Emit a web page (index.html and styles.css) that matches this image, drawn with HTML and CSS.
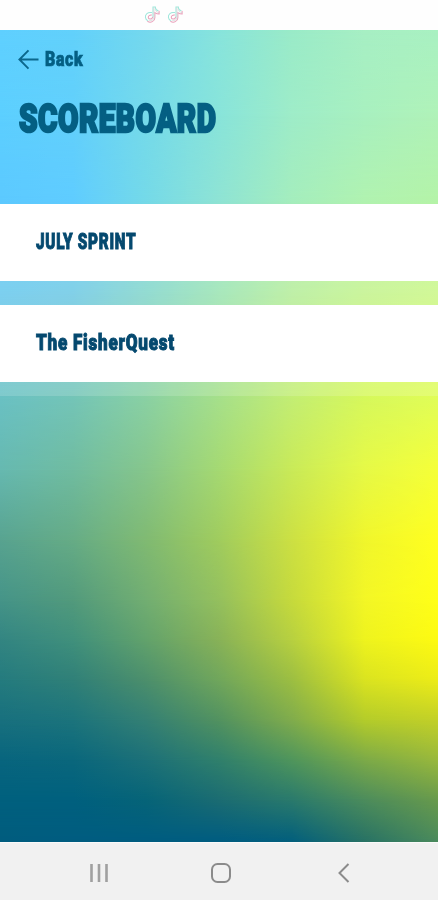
FILE: index.html
```html
<!DOCTYPE html>
<html lang="en">
<head>
<meta charset="utf-8">
<title>Scoreboard</title>
<link rel="stylesheet" href="styles.css">
</head>
<body>
<div class="phone">
  <div class="status">
    <svg class="note" viewBox="0 0 18 20"><use href="#note"/></svg>
    <svg class="note" viewBox="0 0 18 20"><use href="#note"/></svg>
    <svg width="0" height="0"><defs><g id="note" fill="none" stroke-width="1.1" stroke-linecap="round">
      <path stroke="#8fe3d6" d="M8 8C4 7 1 10 1.500 13c.3 2 1.500 3 2.500 3.500M9.500 13V2h2.500c0 2 1 3.500 3 4"/>
      <path stroke="#e58fae" d="M4 17.500c3 1.500 7.500 0 7.500-4V8c1.500 1 3 1.500 4.500 1.500V6.500M8 10.500c-2-.2-3.500 1-3.500 2.500 0 2.500 4 2.500 4.500 0"/>
      <path stroke="#c9cfcf" stroke-width=".8" d="M10.500 3v10.500c0 2.500-3 3.500-5 2.500M12 5c.5 1.500 1.500 2.500 3.500 3"/>
    </g></defs></svg>
  </div>
  <main class="screen">
    <div class="mesh">
      <i class="r0"></i><i class="r1"></i><i class="r2"></i><i class="r3"></i><i class="r4"></i><i class="r5"></i><i class="r6"></i>
      <i class="r7"></i><i class="r8"></i><i class="r9"></i><i class="r10"></i><i class="r11"></i><i class="r12"></i><i class="r13"></i>
    </div>
    <header class="header">
      <a class="back">
        <svg class="arrow" viewBox="0 0 22 22"><path d="M21.500 11H2M11 1.500L1.500 11L11 20.500"/></svg>
        <span class="back-label">Back</span>
      </a>
      <h1 class="title"><span>SCOREBOARD</span></h1>
    </header>
    <section class="list">
      <article class="card"><span class="name sprint">JULY SPRINT</span></article>
      <article class="card"><span class="name quest">The FisherQuest</span></article>
    </section>
  </main>
  <nav class="navbar">
    <svg class="recents" viewBox="0 0 20 20"><path d="M2.500 1v18M10 1v18M17.500 1v18"/></svg>
    <svg class="home" viewBox="0 0 22 22"><rect x="2" y="2" width="18" height="18" rx="5.500"/></svg>
    <svg class="prev" viewBox="0 0 12 20"><path d="M10.500 1L1.500 10L10.500 19"/></svg>
  </nav>
</div>
</body>
</html>
```
FILE: styles.css
```css
* { box-sizing: border-box; }
body { margin: 0; font-family: Roboto, "Liberation Sans", sans-serif; background: #fff; }
.phone { width: 438px; height: 900px; display: flex; flex-direction: column; overflow: hidden; }
.status { height: 30px; display: flex; gap: 6px; padding: 5px 0 0 144px; background: #fefefe; }
.note { width: 17px; height: 19px; opacity: .85; }
.screen { position: relative; height: 812px; overflow: hidden; }

/* Colour mesh: every row is a horizontal ramp that fades in over the row above it */
.mesh, .mesh i { position: absolute; inset: 0; }
.mesh i {
  background: linear-gradient(90deg, var(--c));
  -webkit-mask-image: linear-gradient(180deg, transparent var(--a), #000 var(--b));
  mask-image: linear-gradient(180deg, transparent var(--a), #000 var(--b));
}
.mesh .r0 { --a: -1px; --b: 0px; --c: #5fd0ff, #62d1fb, #74d8ee, #88e4dc, #9aebc8, #a7efc4, #a9f1c2; }
.mesh .r1 { --a: 0px; --b: 85px; --c: #5ccfff, #62d0fb, #75daea, #88e4da, #9eecc8, #a8f0bf, #b0f2b8; }
.mesh .r2 { --a: 85px; --b: 170px; --c: #5cc9ff, #5fccff, #74d9e8, #8ee3d4, #a4edbd, #b0f2b0, #b4f3a8; }
.mesh .r3 { --a: 170px; --b: 263px; --c: #66c7ed, #6dc8e4, #81d5ca, #99e3b1, #b4ed99, #c2f38c, #caf786; }
.mesh .r4 { --a: 263px; --b: 366px; --c: #6ac1c4, #74c5b8, #8ad1a4, #a6e08b, #c3ee74, #d6f85c, #e0fd58; }
.mesh .r5 { --a: 366px; --b: 440px; --c: #66b9b0, #70bca0, #86c68c, #a5d972, #c9ea58, #e6f946, #f5ff38; }
.mesh .r6 { --a: 440px; --b: 510px; --c: #58a390, #66ac86, #80ba72, #a0cc5e, #cce043, #f0f62c, #ffff20; }
.mesh .r7 { --a: 510px; --b: 570px; --c: #459488, #529a7c, #72ae72, #94c05e, #c6da3c, #f3f626, #ffff18; }
.mesh .r8 { --a: 570px; --b: 610px; --c: #338582, #40907c, #62a26c, #88b258, #b7d040, #eef31e, #fdfa12; }
.mesh .r9 { --a: 610px; --b: 650px; --c: #247b7e, #308078, #4c8f6c, #70a65c, #9cbe42, #dae320, #ecec18; }
.mesh .r10 { --a: 650px; --b: 690px; --c: #18707e, #1c747c, #348074, #529260, #80ac4c, #b4cc2a, #c2d028; }
.mesh .r11 { --a: 690px; --b: 730px; --c: #08657e, #0a677c, #1c7078, #30806c, #4f955c, #7caa48, #98b83c; }
.mesh .r12 { --a: 730px; --b: 770px; --c: #00607e, #00607e, #066478, #1b6c72, #2a7a6c, #4c8c5c, #689a4c; }
.mesh .r13 { --a: 770px; --b: 811px; --c: #005c7e, #005c80, #005c80, #005c80, #035f7c, #287264, #4a8a5c; }

.header { position: relative; height: 174px; padding: 17px 18px 0; color: #045f83; }
.back { display: flex; align-items: center; gap: 6px; height: 24px; }
.arrow { width: 21px; height: 21px; fill: none; stroke: #0b678c; stroke-width: 2; }
.back-label { font-size: 20px; line-height: 24px; font-weight: 900; letter-spacing: .8px; transform: scaleX(.8); transform-origin: 0 50%; -webkit-text-stroke: .7px #045f83; }
.title { margin: 23px 0 0 1px; font-size: 39.5px; line-height: 50px; font-weight: 900; }
.title span { display: inline-block; letter-spacing: .6px; transform: scaleX(.752); transform-origin: 0 50%; -webkit-text-stroke: 2.4px #045f83; }
.list { position: relative; height: 192px; display: flex; flex-direction: column; gap: 24px; background: rgba(255, 255, 255, .15); }
.card { height: 77px; display: flex; align-items: center; padding: 0 0 1px 36px; background: #fff; color: #05496f; }
.name { font-size: 22px; line-height: 30px; font-weight: 900; white-space: nowrap; letter-spacing: 1px; transform-origin: 0 50%; -webkit-text-stroke: 1px #05496f; }
.sprint { transform: scaleX(.695); }
.quest { transform: scaleX(.775); }
.navbar { height: 58px; display: flex; align-items: center; padding: 2px 88px 0 89px; background: #f1f1f1; border-top: 1px solid #fafafa; }
.navbar svg { fill: none; stroke: #8b8b8b; stroke-width: 2; }
.recents { width: 20px; height: 20px; }
.navbar .recents { stroke: #a0a0a0; stroke-width: 2.6; }
.home { width: 22px; height: 22px; margin-left: 101px; }
.prev { width: 12px; height: 20px; margin-left: 106px; }
```
